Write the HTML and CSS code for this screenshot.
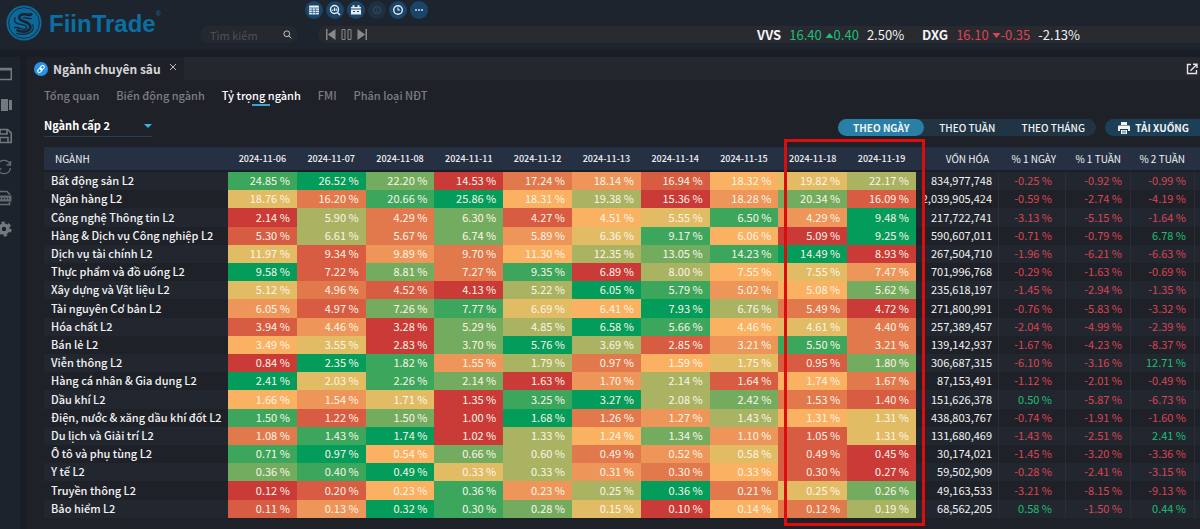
FILE: index.html
```html
<!DOCTYPE html>
<html lang="vi">
<head>
<meta charset="utf-8">
<title>FiinTrade</title>
<link rel="stylesheet" href="styles.css">
</head>
<body>
<header class="topbar">
  <a class="brand" href="#" aria-label="FiinTrade">
    <svg class="brand-mark" viewBox="0 0 36 36">
      <circle cx="18" cy="18" r="17.6" fill="#0b6a9c"/>
      <circle cx="18" cy="18" r="15.4" fill="none" stroke="#1d2d3b" stroke-width="1"/>
      <g fill="none" stroke="#1b2430">
        <path d="M26 8.500c-1.500 2.500-4 1-7 .8-4-.3-6.500 1.500-5.500 4.200 1 2.500 5 2.800 8 4.500 3.500 2 4 5.500.5 7.500-3.500 1.800-8 1-11.500-.7" stroke-width="2.600"/>
        <path d="M9.500 12.500c-2 2.500-1 5.500 2.500 6.300 4 .9 7.500.7 8.500 3 .8 2-2 3-4.500 2.200-2.500-.8-5-2.300-8-1.200M17 13c3-1.500 5 1.500 9 .3M10 28.300c4 1.200 10 1.700 14.500-1 3-2 3.500-5.300 2-7.800" stroke-width="1.300"/>
      </g>
    </svg>
    <span class="brand-name">FiinTrade</span><span class="brand-reg">®</span>
  </a>
  <label class="search">
    <input class="search-input" type="text" placeholder="Tìm kiếm" aria-label="Tìm kiếm">
    <svg class="search-icon" viewBox="0 0 10 10"><circle cx="4.200" cy="4.200" r="3.200"/><path d="M6.600 6.600L9.300 9.300"/></svg>
  </label>
  <div class="market">
    <nav class="tools">
      <button class="tool" aria-label="Bảng"><svg viewBox="0 0 18 18"><rect x="4" y="4.500" width="10" height="9" rx="1" fill="#e6ecf2"/><path d="M4 7h10M4 9.300h10M4 11.500h10M7.300 7v6.500M10.700 7v6.500" stroke="#20578a" stroke-width=".7"/></svg></button>
      <button class="tool" aria-label="Tra cứu"><svg viewBox="0 0 18 18"><g fill="none" stroke="#e6ecf2" stroke-width="1.500"><circle cx="8.500" cy="8.500" r="4"/><path d="M11.500 11.500l2.500 2.500"/><path d="M6.800 10V8.500M8.500 10V6.500M10.200 10V7.500" stroke-width="1.100"/></g></svg></button>
      <button class="tool" aria-label="Lịch"><svg viewBox="0 0 18 18"><path d="M4 6h10v7.500H4zM5.500 4.300h2V6h-2zM10.500 4.300h2V6h-2z" fill="#e6ecf2"/><path d="M4 8h10M6 10.500h2M10 10.500h2" stroke="#20476b" stroke-width="1.200"/></svg></button>
      <button class="tool tool-off" aria-label="Thông báo" disabled><svg viewBox="0 0 18 18"><circle cx="9" cy="9" r="3.500" fill="none" stroke="#364353" stroke-width="1.500"/><path d="M9 7v4" stroke="#364353"/></svg></button>
      <button class="tool" aria-label="Lịch sử"><svg viewBox="0 0 18 18"><g fill="none" stroke="#e6ecf2" stroke-width="1.400"><circle cx="9" cy="9" r="4.300"/><path d="M9 6.500V9h2" stroke-width="1.100"/></g></svg></button>
      <button class="tool" aria-label="Thêm"><svg viewBox="0 0 18 18" fill="#e6ecf2"><circle cx="6" cy="9" r=".9"/><circle cx="9" cy="9" r=".9"/><circle cx="12" cy="9" r=".9"/></svg></button>
    </nav>
    <div class="ticker">
      <div class="player">
        <button class="play" aria-label="Trước"><svg viewBox="0 0 11 11" fill="#85888c"><path d="M1 0h1.500v11H1zM10.500 0v11L2.800 5.500z"/></svg></button>
        <button class="play" aria-label="Tạm dừng"><svg viewBox="0 0 11 11" fill="none" stroke="#85888c"><path d="M1 .5h3v10H1zM7 .5h3v10H7z"/></svg></button>
        <button class="play" aria-label="Sau"><svg viewBox="0 0 11 11" fill="#85888c"><path d="M10 0H8.500v11H10zM.5 0v11l7.700-5.500z"/></svg></button>
      </div>
      <div class="quote"><b>VVS</b><span class="up">16.40 <svg class="arrow" viewBox="0 0 8 5"><path d="M0 5l4-5 4 5z"/></svg>0.40</span><span>2.50%</span></div>
      <div class="quote"><b>DXG</b><span class="down">16.10 <svg class="arrow" viewBox="0 0 8 5"><path d="M0 0l4 5 4-5z"/></svg>-0.35</span><span>-2.13%</span></div>
    </div>
  </div>
</header>
<div class="workspace">
  <aside class="rail">
    <button class="rail-btn" aria-label="Cửa sổ"><svg viewBox="0 0 16 16"><path d="M1 2.500h14.300v11H1z" fill="none" stroke="#74787f" stroke-width="1.500"/><path d="M1 3.500h14" stroke="#74787f" stroke-width="2"/></svg></button>
    <button class="rail-btn" aria-label="Bố cục"><svg viewBox="0 0 16 16" fill="#74787f"><path d="M0 3h4v10H0zM5 2h7v12H5zM13 3h3v10h-3z"/></svg></button>
    <button class="rail-btn" aria-label="Lưu"><svg viewBox="0 0 16 16" fill="none" stroke="#74787f" stroke-width="1.600"><path d="M1.500 1.500h10l3.700 3.300v9.700H1.500zM4 2v4h7V2M4 14V9.500h8V14"/></svg></button>
    <button class="rail-btn" aria-label="Tải lại"><svg viewBox="0 0 16 16" fill="none" stroke="#666b72" stroke-width="1.400"><path d="M1.500 7A6.500 6.500 0 0 1 14 5.500M14.500 2v4h-4M14.500 9A6.500 6.500 0 0 1 2 10.500M1.500 14v-4h4"/></svg></button>
    <button class="rail-btn" aria-label="Xuất tệp"><svg viewBox="0 0 16 16"><path d="M3 5V1.500h8L13.500 4v1M3 12v2.500h10.500V12" fill="none" stroke="#666b72" stroke-width="1.500"/><path d="M0 5.500h15.500v6H0z" fill="#666b72"/><path d="M3 8.500h10" stroke="#29303a" stroke-width="1.500" stroke-dasharray="2 1"/></svg></button>
    <button class="rail-btn" aria-label="Cài đặt"><svg viewBox="0 0 16 16" fill="none" stroke="#74787f"><circle cx="8" cy="8" r="4" stroke-width="3.500"/><circle cx="8" cy="8" r="6.500" stroke-width="2.200" stroke-dasharray="3.400 3.400"/></svg></button>
  </aside>
  <main class="panel">
    <div class="windowbar">
      <div class="window-tab">
        <svg class="link-icon" viewBox="0 0 14 14"><circle cx="7" cy="7" r="7" fill="#2a93e8"/><g transform="rotate(-50 7 7)" fill="none" stroke="#fff" stroke-width="1.100"><rect x="2.800" y="5.400" width="4.800" height="3.200" rx="1.600"/><rect x="6.400" y="5.400" width="4.800" height="3.200" rx="1.600"/></g></svg>
        <h1 class="window-title">Ngành chuyên sâu</h1>
        <button class="close" aria-label="Đóng"><svg viewBox="0 0 8 8"><path d="M1 1l6 6M7 1L1 7" stroke="#b9bcc1"/></svg></button>
      </div>
      <button class="popout" aria-label="Mở cửa sổ mới"><svg viewBox="0 0 12 12" fill="none" stroke="#e4e6e8" stroke-width="1.400"><path d="M5 1.500H1.500v9h9V7M7 1.200h4V5M11 1.200L4.500 7.700"/></svg></button>
    </div>
    <div class="content">
      <nav class="tabs">
        <a class="tab" href="#">Tổng quan</a>
        <a class="tab" href="#">Biến động ngành</a>
        <a class="tab tab-active" href="#" aria-current="page">Tỷ trọng ngành</a>
        <a class="tab" href="#">FMI</a>
        <a class="tab" href="#">Phân loại NĐT</a>
      </nav>
      <div class="filters">
        <div class="level">
          <select class="level-select" aria-label="Cấp ngành"><option>Ngành cấp 2</option></select>
        </div>
        <div class="actions">
          <div class="periods">
            <button class="period period-active" aria-pressed="true">THEO NGÀY</button>
            <button class="period">THEO TUẦN</button>
            <button class="period">THEO THÁNG</button>
          </div>
          <button class="download">
            <svg class="printer" viewBox="0 0 12 12"><path d="M3 0h6v3H3zM1 3.500h10a1 1 0 0 1 1 1V9h-2V7H2v2H0V4.500a1 1 0 0 1 1-1zM3 8h6v4H3z" fill="#f0f3f5"/><path d="M4 9.300h4M4 10.800h4" stroke="#1d4560" stroke-width=".6"/></svg>
            TẢI XUỐNG
          </button>
        </div>
      </div>
      <div class="board">
        <table class="sectors">
          <colgroup>
            <col class="col-name">
            <col span="10">
            <col class="col-cap"><col class="col-day"><col class="col-week"><col class="col-week2"><col class="col-end">
          </colgroup>
          <thead>
            <tr>
              <th class="head-name">NGÀNH</th>
              <th>2024-11-06</th><th>2024-11-07</th><th>2024-11-08</th><th>2024-11-11</th><th>2024-11-12</th>
              <th>2024-11-13</th><th>2024-11-14</th><th>2024-11-15</th><th>2024-11-18</th><th>2024-11-19</th>
              <th class="head-num">VỐN HÓA</th><th class="head-num">% 1 NGÀY</th><th class="head-num">% 1 TUẦN</th><th class="head-num">% 2 TUẦN</th><th></th>
            </tr>
          </thead>
          <tbody id="rows"></tbody>
        </table>
        <div class="highlight"></div>
      </div>
    </div>
  </main>
</div>
<script src="table.js"></script>
</body>
</html>
```

FILE: table.js
```js
// name | daily weights | colour level of each weight (0 lowest, 9 highest) | market cap | 1 day, 1 week, 2 weeks
const data = `Bất động sản L2|24.85 26.52 22.20 14.53 17.24 18.14 16.94 18.32 19.82 22.17|8970231456|834,977,748|-0.25 -0.92 -0.99
Ngân hàng L2|18.76 16.20 20.66 25.86 18.31 19.38 15.36 18.28 20.34 16.09|5289460371|2,039,905,424|-0.59 -2.74 -4.19
Công nghệ Thông tin L2|2.14 5.90 4.29 6.30 4.27 4.51 5.55 6.50 4.29 9.48|0627145839|217,722,741|-3.13 -5.15 -1.64
Hàng & Dịch vụ Công nghiệp L2|5.30 6.61 5.67 6.74 5.89 6.36 9.17 6.06 5.09 9.25|1627358409|590,607,011|-0.71 -0.79 6.78
Dịch vụ tài chính L2|11.97 9.34 9.89 9.70 11.30 12.35 13.05 14.23 14.49 8.93|5132467890|267,504,710|-1.96 -6.21 -6.63
Thực phẩm và đồ uống L2|9.58 7.22 8.81 7.27 9.35 6.89 8.00 7.55 7.55 7.47|9172806453|701,996,768|-0.29 -1.63 -0.69
Xây dựng và Vật liệu L2|5.12 4.96 4.52 4.13 5.22 6.05 5.79 5.02 5.08 5.62|5210698347|235,618,197|-1.45 -2.94 -1.35
Tài nguyên Cơ bản L2|6.05 4.97 7.26 7.77 6.69 6.41 7.93 6.76 5.49 4.72|3178549620|271,800,991|-0.76 -5.83 -3.32
Hóa chất L2|3.94 4.46 3.28 5.29 4.85 6.58 5.66 4.46 4.61 4.40|1307698452|257,389,457|-2.04 -4.99 -2.39
Bán lẻ L2|3.49 3.55 2.83 3.70 5.76 3.69 2.85 3.21 5.50 3.21|4507961382|139,142,937|-1.67 -4.23 -8.37
Viễn thông L2|0.84 2.35 1.82 1.55 1.79 0.97 1.59 1.75 0.95 1.80|0983624517|306,687,315|-6.10 -3.16 12.71
Hàng cá nhân & Gia dụng L2|2.41 2.03 2.26 2.14 1.63 1.70 2.14 1.64 1.74 1.67|9587036142|87,153,491|-1.12 -2.01 -0.49
Dầu khí L2|1.66 1.54 1.71 1.35 3.25 3.27 2.08 2.42 1.53 1.40|4350896721|151,626,378|0.50 -5.87 -6.73
Điện, nước & xăng dầu khí đốt L2|1.50 1.22 1.50 1.00 1.68 1.26 1.27 1.43 1.31 1.31|8170923645|438,803,767|-0.74 -1.91 -1.60
Du lịch và Giải trí L2|1.08 1.43 1.74 1.02 1.33 1.24 1.34 1.10 1.05 1.31|2890647315|131,680,469|-1.43 -2.51 2.41
Ô tô và phụ tùng L2|0.71 0.97 0.54 0.66 0.60 0.49 0.52 0.58 0.49 0.45|8947623510|30,174,021|-1.45 -3.20 -3.36
Y tế L2|0.36 0.40 0.49 0.33 0.33 0.31 0.30 0.33 0.30 0.27|7895632410|59,502,909|-0.28 -2.41 -3.15
Truyền thông L2|0.12 0.20 0.23 0.36 0.23 0.25 0.36 0.21 0.25 0.26|0148369257|49,163,533|-3.21 -8.15 -9.13
Bảo hiểm L2|0.11 0.13 0.32 0.30 0.28 0.15 0.10 0.14 0.12 0.19|1398750426|68,562,205|0.58 -1.50 0.44`;

const body = document.getElementById("rows");

function cell(row, text, className) {
  const td = row.insertCell();
  td.textContent = text;
  td.className = className;
}

for (const line of data.split("\n")) {
  const [name, weights, levels, cap, changes] = line.split("|");
  const row = body.insertRow();
  cell(row, name, "name");
  weights.split(" ").forEach((w, i) => cell(row, w + " %", "heat heat-" + levels[i]));
  cell(row, cap, "cap");
  changes.split(" ").forEach((c, i) =>
    cell(row, c + " %", (c.startsWith("-") ? "change down" : "change up") + (i === 0 ? " day" : "")));
  cell(row, "", "end");
}
```

FILE: styles.css
```css
* { box-sizing: border-box; }
body {
  margin: 0;
  min-height: 100vh;
  display: flex;
  flex-direction: column;
  background: #191d26;
  color: #f2f3f4;
  font: 11px/18px "Noto Sans CJK SC", "Noto Sans", sans-serif;
}
button, input, select { font: inherit; color: inherit; border: 0; padding: 0; background: none; }
a { color: inherit; text-decoration: none; }
svg { display: block; flex: none; }

.topbar { display: flex; height: 50px; background: #1e242d; overflow: hidden; }
.brand { display: flex; width: 200px; padding: 5px 0 0 6px; color: #0b6fa3; }
.brand-mark { width: 36px; height: 36px; margin-right: 7px; }
.brand-name { font: bold 24px/37px "Liberation Sans", Arial, sans-serif; }
.brand-reg { font: 7px/18px "Liberation Sans", Arial, sans-serif; }
.search { display: flex; align-items: center; width: 98px; height: 17px; margin-top: 26px; padding: 0 6px 0 10px; border-radius: 9px; background: #25282e; }
.search-input { flex: 1; min-width: 0; height: 17px; outline: 0; }
.search-input::placeholder { color: #4d5158; opacity: 1; }
.search-icon { width: 9px; height: 9px; fill: none; stroke: #d5d8da; stroke-width: 1; }
.market { flex: 1; margin-left: 20px; }
.tools { display: flex; gap: 3px; height: 26px; padding-top: 1px; margin-left: -13px; }
.tool { width: 18px; height: 18px; border-radius: 50%; background: #19456a; }
.tool svg { width: 18px; height: 18px; }
.tool-off { background: #1c3145; }
.ticker { display: flex; align-items: center; height: 17px; padding-left: 7px; border-radius: 9px 0 0 9px; background: #282a30; font-size: 13px; }
.player { display: flex; gap: 5px; width: 432px; }
.play svg { width: 11px; height: 11px; }
.quote { display: flex; gap: 8px; margin-right: 18px; }
.arrow { display: inline-block; width: 9px; height: 5px; margin-bottom: 2px; fill: currentColor; }
.up { color: #1dbf73; }
.down { color: #dc4453; }

.workspace { flex: 1; display: flex; gap: 7px; padding-top: 7px; }
.rail { width: 20px; background: #1c232d; display: flex; flex-direction: column; gap: 15px; padding-top: 9px; }
.rail-btn { width: 16px; height: 16px; margin-left: -4px; }
.rail-btn svg { width: 16px; height: 16px; }
.panel { flex: 1; min-width: 0; background: #1f2128; }
.windowbar { display: flex; justify-content: space-between; height: 23px; background: #25272f; }
.window-tab { display: flex; align-items: center; gap: 5px; width: 157px; padding-left: 7px; background: #1f2128; }
.link-icon { width: 14px; height: 14px; }
.window-title { margin: 0; font-size: 12px; line-height: 22px; color: #d5d7d9; white-space: nowrap; }
.close { margin: 0 0 4px 3px; }
.close svg { width: 8px; height: 8px; }
.popout { margin-right: 2px; }
.popout svg { width: 12px; height: 12px; }

.content { padding: 7px 0 0 17px; }
.tabs { display: flex; gap: 17px; font-weight: 500; color: #7b7e83; line-height: 17px; }
.tab { display: flex; flex-direction: column; align-items: center; height: 20px; }
.tab-active { color: #fff; }
.tab-active::after { content: ""; width: 18px; height: 2px; background: #3ba4d0; }
.filters { display: flex; justify-content: space-between; height: 40px; padding-top: 8px; }
.level { position: relative; width: 108px; height: 22px; border-bottom: 1px solid #254052; }
.level::after { content: ""; position: absolute; right: 0; top: 9px; border: 4px solid transparent; border-top-color: #34b3e4; border-bottom: 0; pointer-events: none; }
.level-select { width: 100%; height: 20px; appearance: none; font-weight: bold; color: #fff; }
.actions { display: flex; gap: 9px; padding-top: 4px; }
.periods { display: flex; height: 17px; border-radius: 9px; background: #203443; }
.period { width: 86px; height: 17px; line-height: 17px; border-radius: 9px; font-size: 10px; font-weight: 500; }
.period-active { background: #2880a8; font-weight: bold; }
.download { display: flex; align-items: center; gap: 5px; height: 17px; padding: 0 11px 0 13px; border-radius: 9px 0 0 9px; background: #1d4059; font-size: 10px; font-weight: bold; white-space: nowrap; }
.printer { width: 12px; height: 12px; }

.board { position: relative; }
.highlight { position: absolute; right: 275px; top: -8px; bottom: -8px; width: 141px; border: 3px solid #dc0d0d; pointer-events: none; }
.sectors { width: 100%; height: 371px; table-layout: fixed; border-spacing: 0; }
.col-name { width: 184px; }
.col-cap { width: 83px; }
.col-day { width: 67px; }
.col-week { width: 65px; }
.col-week2 { width: 64px; }
.col-end { width: 5px; }
th, td { padding: 0; white-space: nowrap; }
th { height: 25px; background: #253042; border-bottom: 2px solid #1b1e26; font-size: 9px; line-height: 22px; font-weight: 500; text-align: center; }
th.head-name { padding-left: 11px; text-align: left; font-size: 10px; font-weight: 400; }
th.head-num { padding-right: 10px; text-align: right; font-size: 10px; font-weight: 400; }
tbody tr:nth-child(odd) { background: #22272f; }
td { padding-bottom: 2px; line-height: 16px; text-align: right; }
td.name { padding-left: 7px; text-align: left; font-weight: 500; }
.heat { padding-right: 7px; color: #fbf5e8; }
.heat-0 { background: #ca3b37; }
.heat-1 { background: #d85c42; }
.heat-2 { background: #e2794d; }
.heat-3 { background: #ee9659; }
.heat-4 { background: #fbb162; }
.heat-5 { background: #e2bc65; }
.heat-6 { background: #a9b362; }
.heat-7 { background: #74ac5f; }
.heat-8 { background: #3ca65c; }
.heat-9 { background: #039c5a; }
td.cap { padding-right: 6px; border-right: 1px solid #2a2f37; }
td.change { padding-right: 8px; border-right: 1px solid #2a2f37; }
td.day { padding-right: 13px; }
```
